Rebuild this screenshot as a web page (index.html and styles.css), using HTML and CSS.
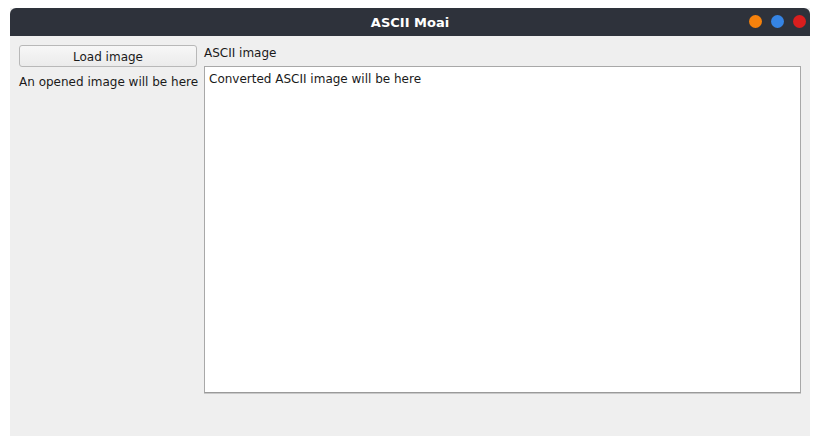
FILE: index.html
```html
<!DOCTYPE html>
<html>
<head>
<meta charset="utf-8">
<link rel="stylesheet" href="styles.css">
</head>
<body>
<div class="window">
  <div class="titlebar">
    <span class="title">ASCII Moai</span>
    <div class="controls">
      <span class="dot orange"></span>
      <span class="dot blue"></span>
      <span class="dot red"></span>
    </div>
  </div>
  <div class="content">
    <div class="left">
      <button class="btn">Load image</button>
      <div class="placeholder">An opened image will be here</div>
    </div>
    <div class="right">
      <div class="label">ASCII image</div>
      <div class="textbox">Converted ASCII image will be here</div>
    </div>
  </div>
</div>
</body>
</html>
```
FILE: styles.css
```css
html, body {
  margin: 0;
  padding: 0;
  background: #ffffff;
}
body {
  padding: 8px 10px 10px 10px;
  font-family: "DejaVu Sans", sans-serif;
  font-size: 12px;
  color: #1a1a1a;
}
.window {
  width: 800px;
  height: 428px;
  display: flex;
  flex-direction: column;
  background: #efefef;
}
.titlebar {
  height: 28px;
  flex: none;
  background: #2e323b;
  border-radius: 6px 6px 0 0;
  position: relative;
  display: flex;
  align-items: center;
  justify-content: center;
}
.title {
  color: #ffffff;
  font-weight: bold;
  font-size: 13px;
}
.controls {
  position: absolute;
  right: 4px;
  top: 7px;
  display: flex;
  gap: 9px;
}
.dot {
  width: 13px;
  height: 13px;
  border-radius: 50%;
}
.orange { background: #f5810c; }
.blue { background: #3584e4; }
.red { background: #d91e1e; }
.content {
  flex: 1;
  display: flex;
  padding: 9px 9px 0 9px;
  gap: 7px;
}
.left {
  width: 178px;
  display: flex;
  flex-direction: column;
}
.btn {
  height: 22px;
  width: 178px;
  font-family: inherit;
  font-size: 12px;
  color: #1a1a1a;
  background: linear-gradient(#f7f7f7, #ebebeb);
  border: 1px solid #b8b8b8;
  border-radius: 3px;
  padding: 2px 0 0 0;
}
.placeholder {
  margin-top: 8px;
  white-space: nowrap;
}
.right {
  flex: 1;
  display: flex;
  flex-direction: column;
}
.label {
  height: 21px;
  line-height: 17px;
}
.textbox {
  height: 315px;
  background: #ffffff;
  border: 1px solid #a8a8a8;
  border-bottom-color: #9a9a9a;
  box-shadow: 0 1px 0 #c8c8c8;
  padding: 5px 4px;
  line-height: 15px;
}
```
